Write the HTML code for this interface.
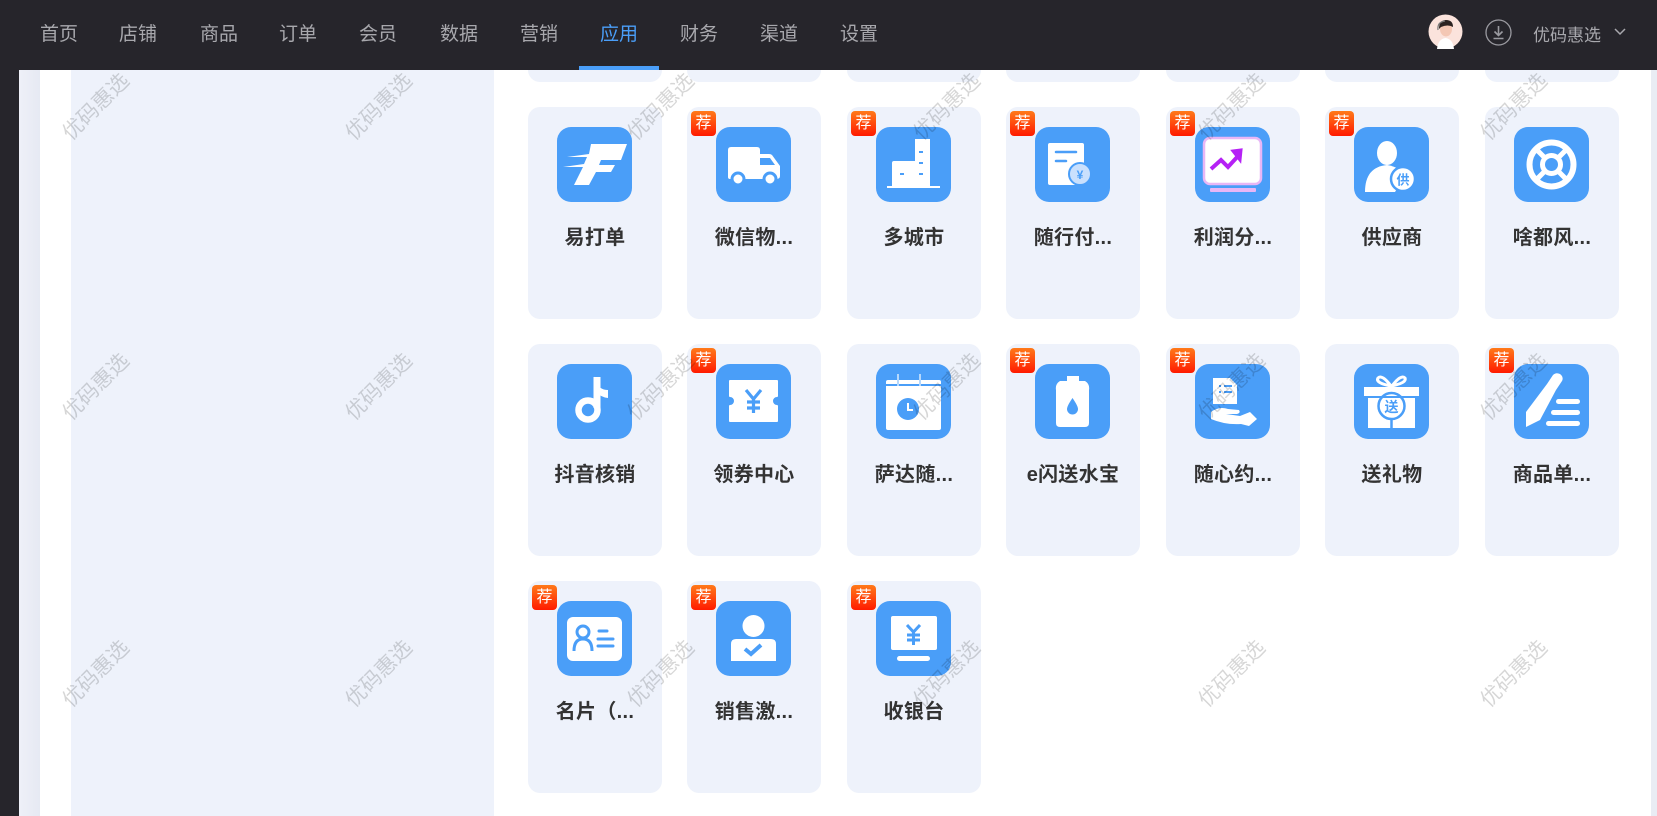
<!DOCTYPE html>
<html><head><meta charset="utf-8"><style>
*{margin:0;padding:0;box-sizing:border-box}
body{width:1657px;height:816px;overflow:hidden;background:#26252b;position:relative;font-family:"Liberation Sans","Noto Sans CJK SC",sans-serif}
.hdr{position:absolute;left:0;top:0;width:1657px;height:70px;background:#26252b;z-index:5}
.nav{position:absolute;top:19px;font-size:19px;color:#a8a8ad;transform:translateX(-50%);white-space:nowrap}
.nav.on{color:#4a9ef8}
.ul{position:absolute;left:579px;top:66px;width:80px;height:4px;background:#4a9ef8}
.main{position:absolute;left:19px;top:70px;width:1632px;height:746px;background:#fff;overflow:hidden}
.strip{position:absolute;left:19px;top:70px;width:21px;height:746px;background:linear-gradient(90deg,#eef0f8,#e6e9f3)}
.side{position:absolute;left:71px;top:70px;width:423px;height:746px;background:#eef2fb}
.rs{position:absolute;left:1651px;top:70px;width:6px;height:746px;background:#e9ecf4}
.card{position:absolute;width:134px;height:212px;background:#eef2fb;border-radius:12px}
.card svg{position:absolute;left:29px;top:20px;width:75px;height:75px}
.card .t{position:absolute;left:0;width:134px;top:114px;text-align:center;font-size:20px;font-weight:bold;color:#333;letter-spacing:0.3px}
.bd{position:absolute;left:4px;top:4px;width:25px;height:25px;border-radius:4px;background:linear-gradient(180deg,#ff7a1a,#ff1a00);color:#fff;font-size:16px;line-height:25px;text-align:center}
.wm{position:absolute;font-size:21px;color:rgba(0,0,0,0.16);transform:translate(-50%,-50%) rotate(-45deg);white-space:nowrap;z-index:3;pointer-events:none}
</style></head><body>
<div class="hdr">
<span class="nav" style="left:59px">首页</span>
<span class="nav" style="left:138px">店铺</span>
<span class="nav" style="left:219px">商品</span>
<span class="nav" style="left:298px">订单</span>
<span class="nav" style="left:378px">会员</span>
<span class="nav" style="left:459px">数据</span>
<span class="nav" style="left:539px">营销</span>
<span class="nav on" style="left:619px">应用</span>
<span class="nav" style="left:699px">财务</span>
<span class="nav" style="left:779px">渠道</span>
<span class="nav" style="left:859px">设置</span>
<div class="ul"></div>
<svg style="position:absolute;left:1428px;top:14px" width="35" height="35" viewBox="0 0 35 35"><circle cx="17.5" cy="17.5" r="17" fill="#fbe3dc"/><path d="M9 35 Q10 25 17.5 24 Q25 25 26 35Z" fill="#fff"/><ellipse cx="18" cy="15" rx="6" ry="7.5" fill="#f4c7b4"/><path d="M11 15 Q11 6 18 6 Q25 6 25 13 Q20 10 13 13Z" fill="#2b2220"/><path d="M10 16 Q9 8 17 7" stroke="#777" stroke-width="1.2" fill="none"/></svg>
<svg style="position:absolute;left:1485px;top:19px" width="27" height="27" viewBox="0 0 27 27"><circle cx="13.5" cy="13.5" r="12.5" fill="none" stroke="#9a9aa0" stroke-width="1.3"/><path d="M13.5 7v9M9.5 12.5l4 4 4-4M8.5 19.5h10" stroke="#9a9aa0" stroke-width="1.6" fill="none"/></svg>
<span style="position:absolute;left:1533px;top:21px;font-size:17px;color:#a8a8ad">优码惠选</span>
<svg style="position:absolute;left:1614px;top:28px" width="12" height="8" viewBox="0 0 12 8"><path d="M1 1l5 5 5-5" stroke="#a8a8ad" stroke-width="1.5" fill="none"/></svg>
</div>
<div class="main"></div>
<div class="strip"></div>
<div class="side"></div>
<div class="rs"></div>

<div class="card" style="left:528px;top:-130px"></div>
<div class="card" style="left:687px;top:-130px"></div>
<div class="card" style="left:847px;top:-130px"></div>
<div class="card" style="left:1006px;top:-130px"></div>
<div class="card" style="left:1166px;top:-130px"></div>
<div class="card" style="left:1325px;top:-130px"></div>
<div class="card" style="left:1485px;top:-130px"></div>

<div class="card" style="left:528px;top:107px"><svg viewBox="0 0 75 75"><rect width="75" height="75" rx="14" fill="#4a9ef8"/><path d="M34 17H70L64 33H44L42 38H58L54 45H39L32 58H17L26 40H6L27 37L30 30H10L32 27Z" fill="#fff"/></svg><div class="t">易打单</div></div>
<div class="card" style="left:687px;top:107px"><div class="bd">荐</div><svg viewBox="0 0 75 75"><rect width="75" height="75" rx="14" fill="#4a9ef8"/><path d="M15 20Q12 20 12 23V50Q12 52 14 52H60Q64 52 64 49V39L56 28Q55 27 53 27H44V23Q44 20 41 20Z" fill="#fff"/><path d="M44 31H54L59 38H44Z" fill="#4a9ef8"/><circle cx="22" cy="52" r="6" fill="#fff" stroke="#4a9ef8" stroke-width="3"/><circle cx="54" cy="52" r="6" fill="#fff" stroke="#4a9ef8" stroke-width="3"/></svg><div class="t">微信物...</div></div>
<div class="card" style="left:847px;top:107px"><div class="bd">荐</div><svg viewBox="0 0 75 75"><rect width="75" height="75" rx="14" fill="#4a9ef8"/><path d="M39 12H54V59H16V36Q16 34 18 34H39Z" fill="#fff"/><rect x="11" y="59" width="53" height="2" fill="#fff"/><path d="M43 25h4M43 36h4M43 47h4M24 47h4" stroke="#4a9ef8" stroke-width="2"/></svg><div class="t">多城市</div></div>
<div class="card" style="left:1006px;top:107px"><div class="bd">荐</div><svg viewBox="0 0 75 75"><rect width="75" height="75" rx="14" fill="#4a9ef8"/><rect x="13" y="16" width="36" height="42" rx="2" fill="#fff"/><path d="M21 25h20M21 34h10" stroke="#4a9ef8" stroke-width="2.5" stroke-linecap="round"/><circle cx="45" cy="47" r="11" fill="#c9e0fd" stroke="#4a9ef8" stroke-width="2"/><text x="45" y="52" font-size="12" fill="#4a9ef8" text-anchor="middle" font-weight="bold">¥</text></svg><div class="t">随行付...</div></div>
<div class="card" style="left:1166px;top:107px"><div class="bd">荐</div><svg viewBox="0 0 75 75"><rect width="75" height="75" rx="14" fill="#4a9ef8"/><rect x="9" y="11" width="57" height="46" rx="6" fill="#fff" stroke="#e8b6f6" stroke-width="2.5"/><rect x="15" y="61" width="46" height="4" rx="1" fill="#e8b6f6"/><path d="M16 42L26 33L33 40L44 28" stroke="#b521f5" stroke-width="4" fill="none"/><path d="M38 24L46 23L45 33Z" fill="#b521f5" stroke="#b521f5" stroke-width="3"/></svg><div class="t">利润分...</div></div>
<div class="card" style="left:1325px;top:107px"><div class="bd">荐</div><svg viewBox="0 0 75 75"><rect width="75" height="75" rx="14" fill="#4a9ef8"/><ellipse cx="33" cy="26" rx="10" ry="12" fill="#fff"/><path d="M11 65Q11 40 33 38Q47 40 50 50L41 65Z" fill="#fff"/><circle cx="49" cy="52" r="12" fill="#fff" stroke="#4a9ef8" stroke-width="2.5"/><text x="49" y="57.5" font-size="13" fill="#4a9ef8" text-anchor="middle" font-weight="bold">供</text></svg><div class="t">供应商</div></div>
<div class="card" style="left:1485px;top:107px"><svg viewBox="0 0 75 75"><rect width="75" height="75" rx="14" fill="#4a9ef8"/><circle cx="37.5" cy="37.5" r="22" fill="none" stroke="#fff" stroke-width="6"/><circle cx="37.5" cy="37.5" r="9" fill="none" stroke="#fff" stroke-width="5"/><path d="M24 24l7 7M51 24l-7 7M24 51l7-7M51 51l-7-7" stroke="#fff" stroke-width="5"/></svg><div class="t">啥都风...</div></div>

<div class="card" style="left:528px;top:344px"><svg viewBox="0 0 75 75"><rect width="75" height="75" rx="14" fill="#4a9ef8"/><path d="M40 13V44" stroke="#fff" stroke-width="7"/><circle cx="31" cy="46" r="9.5" fill="none" stroke="#fff" stroke-width="6.5"/><path d="M37 12Q40 26 51 26V34Q43 33 40 28Z" fill="#fff"/></svg><div class="t">抖音核销</div></div>
<div class="card" style="left:687px;top:344px"><div class="bd">荐</div><svg viewBox="0 0 75 75"><rect width="75" height="75" rx="14" fill="#4a9ef8"/><path d="M14 17H61V32A5 5 0 0 0 61 42V57H14V42A5 5 0 0 0 14 32Z" fill="#fff" stroke="#fff" stroke-width="2" stroke-linejoin="round"/><path d="M30 26l7.5 9 7.5-9M37.5 35v14M31 38h13M31 44h13" stroke="#4a9ef8" stroke-width="3.2" fill="none"/></svg><div class="t">领券中心</div></div>
<div class="card" style="left:847px;top:344px"><svg viewBox="0 0 75 75"><rect width="75" height="75" rx="14" fill="#4a9ef8"/><rect x="10" y="16" width="55" height="50" rx="2" fill="#fff"/><rect x="10" y="20" width="55" height="2" fill="#4a9ef8"/><path d="M22 10v13M44 10v13" stroke="#fff" stroke-width="2"/><path d="M22 10v12M44 10v12" stroke="#4a9ef8" stroke-width="0.8"/><circle cx="32" cy="45" r="11" fill="#4a9ef8"/><path d="M32 39v7h5" stroke="#fff" stroke-width="2" fill="none"/></svg><div class="t">萨达随...</div></div>
<div class="card" style="left:1006px;top:344px"><div class="bd">荐</div><svg viewBox="0 0 75 75"><rect width="75" height="75" rx="14" fill="#4a9ef8"/><path d="M32 12H44V17H50Q55 20 54 26V59Q54 63 50 63H25Q21 63 21 59V26Q20 20 25 17H32Z" fill="#fff"/><path d="M37.5 34Q43 42 43 45A5.5 5.5 0 0 1 32 45Q32 42 37.5 34Z" fill="#4a9ef8"/></svg><div class="t">e闪送水宝</div></div>
<div class="card" style="left:1166px;top:344px"><div class="bd">荐</div><svg viewBox="0 0 75 75"><rect width="75" height="75" rx="14" fill="#4a9ef8"/><path d="M18 14H35L42 21V40H18Z" fill="#fff"/><path d="M24 22h2M29 22h8M24 28h2M29 28h8" stroke="#4a9ef8" stroke-width="2"/><path d="M16 48Q24 42 33 45L44 46Q46 49 42 50H31L45 52L55 48L62 55L54 62L46 60Q30 61 16 55Z" fill="#fff"/></svg><div class="t">随心约...</div></div>
<div class="card" style="left:1325px;top:344px"><svg viewBox="0 0 75 75"><rect width="75" height="75" rx="14" fill="#4a9ef8"/><path d="M37 22Q28 10 24 14Q21 19 37 22Q53 19 51 14Q47 10 38 22" stroke="#fff" stroke-width="3" fill="none"/><rect x="10" y="23" width="55" height="10" fill="#fff"/><rect x="14" y="33" width="47" height="31" fill="#fff"/><circle cx="37.5" cy="42" r="13" fill="#fff" stroke="#4a9ef8" stroke-width="2.5"/><path d="M37.5 55v9" stroke="#4a9ef8" stroke-width="2.5"/><path d="M10 33h55" stroke="#4a9ef8" stroke-width="2"/><text x="37.5" y="48" font-size="14" fill="#4a9ef8" text-anchor="middle" font-weight="bold">送</text></svg><div class="t">送礼物</div></div>
<div class="card" style="left:1485px;top:344px"><div class="bd">荐</div><svg viewBox="0 0 75 75"><rect width="75" height="75" rx="14" fill="#4a9ef8"/><path d="M33 20L39 11Q42 8 46 10Q50 13 48 17L42 26L26 56L12 63L12 48Z" fill="#fff"/><rect x="42" y="35" width="24" height="5" rx="2.5" fill="#fff"/><rect x="37" y="46" width="29" height="5" rx="2.5" fill="#fff"/><rect x="32" y="57" width="34" height="5" rx="2.5" fill="#fff"/></svg><div class="t">商品单...</div></div>

<div class="card" style="left:528px;top:581px"><div class="bd">荐</div><svg viewBox="0 0 75 75"><rect width="75" height="75" rx="14" fill="#4a9ef8"/><rect x="10" y="16" width="55" height="44" rx="6" fill="#fff"/><circle cx="26" cy="31" r="6" fill="none" stroke="#4a9ef8" stroke-width="3"/><path d="M17 50Q17 38 26 38Q35 38 35 50" stroke="#4a9ef8" stroke-width="3" fill="none"/><path d="M42 30h8M41 38h15M41 45h15" stroke="#4a9ef8" stroke-width="3" stroke-linecap="round"/></svg><div class="t">名片（...</div></div>
<div class="card" style="left:687px;top:581px"><div class="bd">荐</div><svg viewBox="0 0 75 75"><rect width="75" height="75" rx="14" fill="#4a9ef8"/><circle cx="37.5" cy="25" r="11" fill="#fff"/><path d="M15 43Q15 38 20 38H55Q60 38 60 43V60H15Z" fill="#fff"/><path d="M29 48l6 5 10-9" stroke="#4a9ef8" stroke-width="4" fill="none"/></svg><div class="t">销售激...</div></div>
<div class="card" style="left:847px;top:581px"><div class="bd">荐</div><svg viewBox="0 0 75 75"><rect width="75" height="75" rx="14" fill="#4a9ef8"/><rect x="15" y="15" width="46" height="34" rx="2" fill="#fff"/><rect x="21" y="55" width="33" height="5" rx="2.5" fill="#fff"/><path d="M31 24l6.5 7 6.5-7M37.5 31v13M31 34h13M31 39h13" stroke="#4a9ef8" stroke-width="3" fill="none"/></svg><div class="t">收银台</div></div>

<div class="wm" style="left:95px;top:106px">优码惠选</div>
<div class="wm" style="left:378px;top:106px">优码惠选</div>
<div class="wm" style="left:660px;top:106px">优码惠选</div>
<div class="wm" style="left:946px;top:106px">优码惠选</div>
<div class="wm" style="left:1231px;top:106px">优码惠选</div>
<div class="wm" style="left:1513px;top:106px">优码惠选</div>
<div class="wm" style="left:95px;top:386px">优码惠选</div>
<div class="wm" style="left:378px;top:386px">优码惠选</div>
<div class="wm" style="left:660px;top:386px">优码惠选</div>
<div class="wm" style="left:946px;top:386px">优码惠选</div>
<div class="wm" style="left:1231px;top:386px">优码惠选</div>
<div class="wm" style="left:1513px;top:386px">优码惠选</div>
<div class="wm" style="left:95px;top:673px">优码惠选</div>
<div class="wm" style="left:378px;top:673px">优码惠选</div>
<div class="wm" style="left:660px;top:673px">优码惠选</div>
<div class="wm" style="left:946px;top:673px">优码惠选</div>
<div class="wm" style="left:1231px;top:673px">优码惠选</div>
<div class="wm" style="left:1513px;top:673px">优码惠选</div>
</body></html>
